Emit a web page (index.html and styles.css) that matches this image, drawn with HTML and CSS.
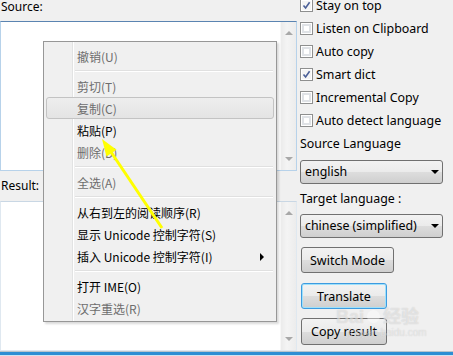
FILE: index.html
```html
<!DOCTYPE html>
<html lang="zh-CN">
<head>
  <meta charset="UTF-8">
  <title>Translator</title>
  <link rel="stylesheet" href="styles.css">
</head>
<body>
  <div class="window">
    <div class="main">
      <!-- Левая колонка: исходный текст и результат -->
      <div class="left">
        <div class="caption">Source:</div>
        <div class="textbox source">
          <div class="text-area"></div>
          <div class="scrollbar"><span class="arrow up"></span><span class="arrow down"></span></div>
        </div>
        <div class="caption result-caption">Result:</div>
        <div class="textbox result">
          <div class="text-area"></div>
          <div class="scrollbar"><span class="arrow up"></span><span class="arrow down"></span></div>
        </div>
      </div>

      <!-- Правая колонка: настройки -->
      <div class="side">
        <label class="check"><span class="box checked"><svg viewBox="0 0 9 9" width="9" height="9"><path d="M1.5 4.5 L3.6 7 L7.6 1.2" fill="none" stroke="#4a5f97" stroke-width="1.6"/></svg></span>Stay on top</label>
        <label class="check"><span class="box"></span>Listen on Clipboard</label>
        <label class="check"><span class="box"></span>Auto copy</label>
        <label class="check"><span class="box checked"><svg viewBox="0 0 9 9" width="9" height="9"><path d="M1.5 4.5 L3.6 7 L7.6 1.2" fill="none" stroke="#4a5f97" stroke-width="1.6"/></svg></span>Smart dict</label>
        <label class="check"><span class="box"></span>Incremental Copy</label>
        <label class="check"><span class="box"></span>Auto detect language</label>
        <div class="side-label">Source Language</div>
        <div class="combo">english<span class="drop"></span></div>
        <div class="side-label target">Target language :</div>
        <div class="combo">chinese (simplified)<span class="drop"></span></div>
        <button class="btn switch">Switch Mode</button>
        <button class="btn translate">Translate</button>
        <button class="btn copy">Copy result</button>
      </div>
    </div>
    <div class="frame-bottom"></div>

    <!-- Контекстное меню поверх поля -->
    <div class="menu">
      <div class="item disabled">撤销(U)</div>
      <div class="sep"></div>
      <div class="item disabled">剪切(T)</div>
      <div class="item disabled hover">复制(C)</div>
      <div class="item">粘贴(P)</div>
      <div class="item disabled">删除(D)</div>
      <div class="sep"></div>
      <div class="item disabled">全选(A)</div>
      <div class="sep"></div>
      <div class="item">从右到左的阅读顺序(R)</div>
      <div class="item">显示 Unicode 控制字符(S)</div>
      <div class="item sub">插入 Unicode 控制字符(I)<span class="sub-arrow"></span></div>
      <div class="sep"></div>
      <div class="item">打开 IME(O)</div>
      <div class="item disabled">汉字重选(R)</div>
    </div>

    <svg class="pointer" width="453" height="356" viewBox="0 0 453 356">
      <line x1="162" y1="228" x2="109" y2="149" stroke="#ffff00" stroke-width="3"/>
      <polygon points="102,139 116.5,149.7 106.5,156.5" fill="#ffff00"/>
    </svg>

    <div class="watermark">
      <div class="wm-top">Bai<span class="paw"></span>经验</div>
      <div class="wm-url">jingyan.baidu.com</div>
    </div>
  </div>
</body>
</html>
```

FILE: styles.css
```css
body { margin:0; background:#f0f0f0; font-family:'Noto Sans', 'Noto Sans CJK SC', sans-serif; font-size:12px; color:#000; }

.window { position:relative; width:453px; height:356px; overflow:hidden; background:#f0f0f0; }
.main { display:grid; grid-template-columns:297px 1fr; column-gap:3px; height:351px; }

/* Левая колонка */
.left { display:flex; flex-direction:column; }
.caption { height:21px; line-height:14px; padding-left:1px; }
.result-caption { height:30px; padding-top:8px; box-sizing:border-box; }

.textbox { display:flex; height:150px; box-sizing:border-box; background:#fff; border:1px solid #b7d2ea; }
.textbox.source { border-top-color:#5b84b1; }
.textbox.result { border-color:#dfe8f0; border-top-color:#c9d7e4; }
.text-area { flex:1; }
.scrollbar { width:15px; background:linear-gradient(to right, #ebebeb, #f4f4f4 40%, #ececec); border-left:1px solid #f7f7f7; display:flex; flex-direction:column; justify-content:space-between; align-items:center; padding:9px 0; }
.arrow { width:0; height:0; border-left:4px solid transparent; border-right:4px solid transparent; }
.arrow.up { border-bottom:4px solid #a8a8a8; }
.arrow.down { border-top:4px solid #a8a8a8; }

/* Правая колонка */
.side { display:flex; flex-direction:column; align-items:flex-start; margin-top:-6px; font-size:12.4px; }
.check { height:23px; display:flex; align-items:center; gap:3px; white-space:nowrap; }
.box { width:13px; height:13px; box-sizing:border-box; border:1px solid #8e8f8f; background:#fff; display:flex; align-items:center; justify-content:center; box-shadow:inset 0 0 0 1px #fff, inset 0 0 0 3px #dfe2e6; }
.box.checked { box-shadow:inset 0 0 0 1px #fff; background:#f4f4f4; }
.side-label { height:23px; line-height:23px; }
.side-label.target { height:16px; line-height:16px; margin-top:7px; }

.combo { position:relative; width:143px; height:24px; box-sizing:border-box; margin-top:5px; padding-left:4px; line-height:22px; border:1px solid #707070; border-radius:3px; background:linear-gradient(#f2f2f2, #ebebeb 50%, #dddddd 51%, #cfcfcf); }
.side-label.target + .combo { margin-top:7px; }
.drop { position:absolute; right:3px; top:9px; width:0; height:0; border-left:4px solid transparent; border-right:4px solid transparent; border-top:4px solid #000; }

.btn { font:inherit; font-size:12.5px; color:#000; height:26px; margin-left:1px; border:1px solid #707070; border-radius:3px; background:linear-gradient(#f2f2f2, #ebebeb 50%, #dddddd 51%, #cfcfcf); padding:0; }
.btn.switch { width:93px; margin-top:9px; }
.btn.translate { width:86px; margin-top:10px; border-color:#3c9be0; box-shadow:inset 0 0 0 1px #9fe0fa; }
.btn.copy { width:86px; height:27px; margin-top:9px; }

.frame-bottom { height:5px; background:linear-gradient(#b9c4cc 0, #b9c4cc 1px, #2d8ed3 1px, #2d8ed3 4px, #cfe4f2 4px); }

/* Контекстное меню */
.menu { position:absolute; left:43px; top:41px; width:234px; box-sizing:border-box; padding:3px 0 2px; border:1px solid #979797; background:#f0f0f0 linear-gradient(to right, transparent 28px, #e2e3e3 28px, #e2e3e3 29px, #fff 29px, #fff 30px, transparent 30px); box-shadow:2px 2px 2px rgba(0,0,0,0.15); font-family:'Noto Sans CJK SC', sans-serif; font-size:12px; }
.item { position:relative; height:22px; line-height:21px; margin:0 2px; padding-left:30px; box-sizing:border-box; border:1px solid transparent; border-radius:3px; white-space:nowrap; }
.item.disabled { color:#6d6d6d; }
.item.hover { border-color:#c3c3c3; background:linear-gradient(#eeeeee, #e4e4e4); }
.sep { height:8px; margin-left:31px; margin-right:3px; background:linear-gradient(transparent 3px, #e0e0e0 3px, #e0e0e0 4px, #fff 4px, #fff 5px, transparent 5px); }
.sub-arrow { position:absolute; right:9px; top:7px; width:0; height:0; border-top:4px solid transparent; border-bottom:4px solid transparent; border-left:4px solid #000; }

.pointer { position:absolute; left:0; top:0; pointer-events:none; }

/* Водяной знак */
.watermark { position:absolute; left:336px; top:307px; color:rgba(255,255,255,0.45); text-shadow:0 0 1px rgba(150,150,150,0.45); font-family:'Liberation Sans', 'Noto Sans CJK SC', sans-serif; pointer-events:none; }
.wm-top { font-size:18px; font-weight:bold; line-height:20px; white-space:nowrap; }
.paw { display:inline-block; width:13px; height:13px; margin:0 3px; border-radius:50%; background:rgba(255,255,255,0.4); }
.wm-url { font-size:10px; margin-left:10px; line-height:12px; }
```
